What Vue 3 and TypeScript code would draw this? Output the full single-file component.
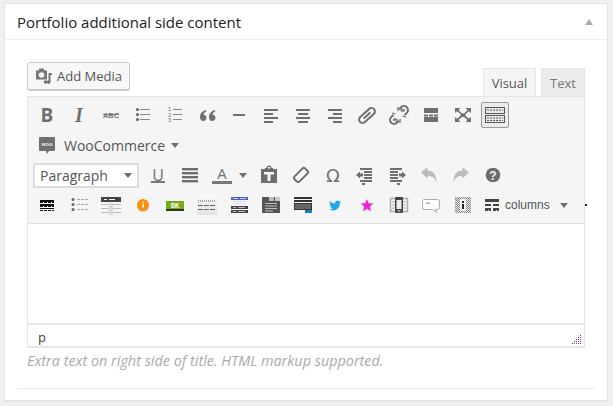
<script setup lang="ts">
// toolbar icons are small inline svgs, 24x24 box centred in a 32px button
const ic = (inner: string) =>
  `<svg width="24" height="24" viewBox="0 0 24 24" xmlns="http://www.w3.org/2000/svg">${inner}</svg>`

const bars = (rows: [number, number, number][], fill = '#6f6f6f', h = 2) =>
  rows.map(([x, y, w]) => `<rect x="${x}" y="${y}" width="${w}" height="${h}" fill="${fill}"/>`).join('')

const glyph = (t: string, style: string) => `<span class="glyph" style="${style}">${t}</span>`

const rowOne = [
  glyph('B', "font:700 19px 'Open Sans',sans-serif"),
  glyph('I', "font:italic 700 20px 'Liberation Serif',serif"),
  ic(`<text x="12" y="15" text-anchor="middle" font-family="Liberation Sans" font-weight="700" font-size="7.5" fill="#777">ABC</text><rect x="4" y="11" width="16" height="1" fill="#777"/>`),
  ic(bars([[9, 6, 10], [9, 11, 10], [9, 16, 10]], '#888', 1) + `<circle cx="6.5" cy="6.5" r="1.6" fill="#666"/><circle cx="6.5" cy="11.5" r="1.6" fill="#666"/><circle cx="6.5" cy="16.5" r="1.6" fill="#666"/>`),
  ic(bars([[10, 6, 9], [10, 11, 9], [10, 16, 9]], '#888', 1) + `<g font-family="Liberation Sans" font-size="5.5" fill="#666"><text x="5" y="8">1</text><text x="5" y="13.5">2</text><text x="5" y="19">3</text></g>`),
  ic(`<path d="M11 7C7.500 8 5 10.500 5 14c0 2.500 1.500 4 3.300 4s3.200-1.400 3.200-3.200-1.300-3-3-3c.3-1.400 1.200-2.500 2.700-3.200zM20 7c-3.500 1-6 3.500-6 7 0 2.500 1.500 4 3.300 4s3.200-1.400 3.200-3.200-1.300-3-3-3c.3-1.400 1.200-2.500 2.700-3.200z" fill="#6f6f6f"/>`),
  ic(bars([[6, 11, 12]])),
  ic(bars([[5, 6, 14], [5, 10, 9], [5, 14, 14], [5, 18, 9]])),
  ic(bars([[5, 6, 14], [7, 10, 10], [5, 14, 14], [7, 18, 10]])),
  ic(bars([[5, 6, 14], [10, 10, 9], [5, 14, 14], [10, 18, 9]])),
  ic(`<g transform="rotate(-42 12 12.500)" fill="none" stroke="#6f6f6f" stroke-width="2"><rect x="2.500" y="9" width="19" height="7" rx="3.500"/><path d="M7.500 12.500h9"/></g>`),
  ic(`<g transform="rotate(-45 12 12)" fill="none" stroke="#6f6f6f" stroke-width="2"><path d="M8 8H5a4 4 0 0 0 0 8h3M16 8h3a4 4 0 0 1 0 8h-3"/><path d="M4 12h3M17 12h3"/></g><path d="M11 4v4M15 5l-1 3.500M5 10l3.500 1M19 14l-3.500-1M9 19l1-3.500M13 20v-4" stroke="#6f6f6f" stroke-width="1.300"/>`),
  ic(bars([[5, 5, 14]], '#6f6f6f', 5) + bars([[5, 11.5, 4], [10, 11.5, 4], [15, 11.5, 4]]) + bars([[5, 14, 14]], '#6f6f6f', 5)),
  ic(`<path d="M4 5h5.500L7.500 7 11 10.500h2L16.500 7l-2-2H20v5l-2-1.700-3.500 2.700v2l3.500 2.700 2-1.700v5h-5.500l2-2-3.500-3h-2l-3.500 3 2 2H4v-5l2 1.700L9.500 13v-2L6 8.300 4 10z" fill="#6f6f6f"/>`),
]

const kitchen = ic(`<g fill="none" stroke="#555" stroke-width="1"><rect x="2.500" y="4.500" width="19" height="6"/><rect x="2.500" y="12.500" width="19" height="7"/></g>` +
  `<path d="M4 7h16M4 15h16M4 17.500h16" stroke="#555" stroke-width="1.200" stroke-dasharray="2 1"/>`)

const rowThree = [
  glyph('U', "font:400 16px 'Open Sans',sans-serif;border-bottom:2px solid #777;line-height:12px;padding:0 1px;margin:2px 0 0 4px"),
  ic(bars([[6, 5, 16], [6, 9, 16], [6, 13, 16], [6, 17, 16]], '#6f6f6f', 2.4)),
]

const rowThreeRest = [
  ic(`<path d="M4 6h4V5h1.500a2.500 2.500 0 0 1 5 0H16v1h4v14H4z" fill="#6f6f6f"/><rect x="7" y="9" width="10" height="2.500" fill="#f5f5f5"/><rect x="10.500" y="9" width="3" height="9" fill="#f5f5f5"/><rect x="11" y="4" width="2" height="1.500" fill="#f5f5f5"/>`),
  ic(`<g transform="rotate(-45 12 12)"><rect x="4.500" y="8.500" width="15" height="7" rx="2" fill="#fbfbfb" stroke="#6f6f6f" stroke-width="2"/></g>`),
  glyph('Ω', "font:400 18px 'DejaVu Sans',sans-serif"),
  ic(bars([[7, 5, 12], [11, 8, 8], [11, 11, 8], [11, 14, 8], [7, 17, 12], [9, 20, 3]], '#6f6f6f', 2) + `<path d="M3 12l4-3.500v2h3v3H7v2z" fill="#6f6f6f"/>`),
  ic(bars([[5, 5, 12], [5, 8, 8], [5, 11, 8], [5, 14, 8], [5, 17, 12], [12, 20, 3]], '#6f6f6f', 2) + `<path d="M21 12l-4-3.500v2h-3v3h3v2z" fill="#6f6f6f"/>`),
  ic(`<path d="M4 9.500 10.500 4v3.500c5.500 0 9 3.500 9 12.500-1.500-5.500-4-7-9-7v2.500z" fill="#bcbcbc"/>`),
  ic(`<path d="M20 9.500 13.500 4v3.500c-5.500 0-9 3.500-9 12.500 1.500-5.500 4-7 9-7v2.500z" fill="#bcbcbc"/>`),
  ic(`<circle cx="12" cy="12" r="7.300" fill="#6d6d6d"/><text x="12" y="16.500" text-anchor="middle" font-family="Liberation Sans" font-weight="700" font-size="12" fill="#f5f5f5">?</text>`),
]

const dash = (y: number, x: number, w: number, c: string, h = 1) =>
  `<path d="M${x} ${y + h / 2}h${w}" stroke="${c}" stroke-width="${h}" stroke-dasharray="3 1"/>`

const rowFour = [
  ic(bars([[5, 7, 14]], '#111', 2) + dash(9, 5, 14, '#111') + bars([[5, 11, 14]], '#111', 2) + dash(13, 5, 14, '#111') + bars([[5, 15, 14]], '#111', 1) + dash(17, 5, 14, '#111')),
  ic(`<circle cx="6" cy="6.500" r="1.500" fill="#666"/><circle cx="6" cy="11.500" r="1.500" fill="#666"/><circle cx="6" cy="16.500" r="1.500" fill="#666"/>` + dash(6, 10, 11, '#aaa') + dash(11, 10, 11, '#aaa') + dash(16, 10, 11, '#aaa')),
  ic(`<rect x="2" y="4" width="20" height="5" fill="#444"/><path d="M5 6.500h3M10 6.500h6" stroke="#fff"/><path d="M2 11.500h8M14 11.500h8M2 15.500h8M14 15.500h8M2 19.500h8M14 19.500h8M11 10v12M13 10v12" stroke="#bbb"/>`),
  ic(`<circle cx="12" cy="13" r="6" fill="#c9c9c9"/><circle cx="12" cy="12" r="6" fill="#f8900f"/><rect x="11.500" y="11" width="1.500" height="3.500" fill="#fff"/><rect x="11.500" y="9" width="1.500" height="1" fill="#fff"/>`),
  ic(`<rect x="3" y="8" width="18" height="8" fill="#74ad12"/><rect x="3" y="16" width="18" height="2" fill="#333"/><text x="12" y="14.500" text-anchor="middle" font-family="DejaVu Sans Mono" font-weight="700" font-size="7" fill="#fff">OK</text>`),
  ic(`<defs><linearGradient id="pbg" x1="0" y1="0" x2="0" y2="1"><stop offset="0" stop-color="#f9f9f9"/><stop offset="1" stop-color="#e2e2e2"/></linearGradient></defs><rect x="2" y="2" width="20" height="20" fill="url(#pbg)"/><path d="M3 8h18" stroke="#555" stroke-dasharray="1 1"/><path d="M3 12.500h18M3 16.500h18" stroke="#666" stroke-dasharray="5 1"/>`),
  ic(bars([[4, 4, 17]], '#4562c4', 3) + `<path d="M6 5.500h5M13 5.500h6" stroke="#c5cff0"/>` + bars([[6, 8, 13], [6, 10, 13]], '#dde', 1) + bars([[4, 13, 17], [4, 17, 17]], '#444', 3) + `<path d="M6 14.500h3M11 14.500h7M6 18.500h3M11 18.500h7" stroke="#bbb"/>`),
  ic(`<rect x="3" y="4" width="18" height="16" fill="#555"/><rect x="10" y="4" width="5" height="4" fill="#bbb"/><rect x="16" y="4" width="5" height="4" fill="#ccc"/>` + bars([[6, 10, 12], [6, 12.5, 12], [6, 15, 12], [6, 17.5, 8]], '#bbb', 1)),
  ic(bars([[3, 4, 18], [3, 7, 18]], '#333', 2) + `<rect x="3.500" y="10.500" width="17" height="6" fill="#666" stroke="#333"/><rect x="14" y="17" width="7" height="3" fill="#1e7fb0"/>`),
  ic(`<g transform="translate(6 6.500) scale(.5)"><path d="M23.953 4.570a10 10 0 01-2.825.775 4.958 4.958 0 002.163-2.723c-.951.555-2.005.959-3.127 1.184a4.920 4.920 0 00-8.384 4.482C7.690 8.095 4.067 6.130 1.640 3.162a4.822 4.822 0 00-.666 2.475c0 1.710.870 3.213 2.188 4.096a4.904 4.904 0 01-2.228-.616v.060a4.923 4.923 0 003.946 4.827 4.996 4.996 0 01-2.212.085 4.936 4.936 0 004.604 3.417 9.867 9.867 0 01-6.102 2.105c-.390 0-.779-.023-1.170-.067a13.995 13.995 0 007.557 2.209c9.053 0 13.998-7.496 13.998-13.985 0-.210 0-.420-.015-.630A9.935 9.935 0 0024 4.590z" fill="#22a8ea"/></g>`),
  ic(`<path d="M12 6l1.700 4.200 4.800.4-3.600 3 1.100 4.600-4-2.500-4 2.500 1.100-4.600-3.600-3 4.800-.4z" fill="#ee1fd6"/>`),
  ic(`<rect x="3.500" y="5.500" width="17" height="13" fill="#f7f7f7" stroke="#aaa" stroke-width="1.500"/><path d="M5 9h3M5 12h3M5 15h3M16 9h3M16 12h3M16 15h3" stroke="#aaa"/><rect x="8" y="4" width="8" height="16" rx="1" fill="#444"/><rect x="9.500" y="7" width="5" height="9" fill="#eee"/><rect x="10.500" y="17.500" width="3" height="1" fill="#eee"/>`),
  ic(`<path d="M5.500 6.500h13a2 2 0 0 1 2 2v6a2 2 0 0 1-2 2h-2l1 3-4-3H5.500a2 2 0 0 1-2-2v-6a2 2 0 0 1 2-2z" fill="#fff" stroke="#aaa"/><path d="M8 9.500v1.500M10 9.500v1.500" stroke="#555"/>`),
  ic(`<defs><pattern id="hatch" width="2" height="2" patternUnits="userSpaceOnUse"><rect width="2" height="2" fill="#e8e8e8"/><rect width="1" height="1" fill="#888"/><rect x="1" y="1" width="1" height="1" fill="#888"/></pattern></defs><rect x="4" y="4" width="16" height="16" fill="url(#hatch)"/><rect x="9" y="6" width="6" height="12" fill="#f5f5f5"/><rect x="11" y="8" width="2" height="2" fill="#222"/><rect x="11" y="11" width="2" height="5" fill="#222"/>`),
]

const columnsIcon = ic(bars([[6, 6, 14]], '#444', 3) + bars([[6, 11, 6], [14, 11, 6], [6, 15, 6], [14, 15, 6]], '#444', 2) + bars([[6, 17, 3], [10, 17, 2], [14, 17, 3], [18, 17, 2]], '#444', 1))

// resize handle: little triangle of dots
const gripDots: { x: number; y: number }[] = []
for (let r = 0; r < 5; r++) {
  for (let c = 4 - r; c < 5; c++) gripDots.push({ x: c * 2, y: r * 2 })
}
</script>

<template>
  <div class="page">
    <section class="card">
      <header class="card-head">
        <h3>Portfolio additional side content</h3>
        <i class="caret-up"></i>
      </header>

      <div class="card-body">
        <div class="editor-top">
          <button class="media-btn">
            <svg width="18" height="18" viewBox="0 0 18 18">
              <path d="M1 3.500h2.500l1-2h4l1 2H12v9H1z" fill="#777" />
              <circle cx="6.500" cy="8" r="2.800" fill="#f7f7f7" />
              <circle cx="10.500" cy="15" r="1.800" fill="#777" />
              <path d="M13.500 6H17v2h-1.500v7a1.800 1.800 0 1 1-2-1.700z" fill="#777" />
            </svg>
            Add Media
          </button>
          <div class="tabs">
            <span class="tab active">Visual</span>
            <span class="tab">Text</span>
          </div>
        </div>

        <div class="editor">
          <div class="toolbar">
            <div class="tool-row">
              <span v-for="(t, i) in rowOne" :key="i" class="tool" v-html="t"></span>
              <span class="tool tool-on" v-html="kitchen"></span>
            </div>
            <div class="tool-row woo-row">
              <svg class="woo-logo" width="16" height="17" viewBox="0 0 16 17">
                <path d="M1 0h14a1 1 0 0 1 1 1v12a1 1 0 0 1-1 1H10l-2 3-1-3H1a1 1 0 0 1-1-1V1a1 1 0 0 1 1-1z" fill="#6f6f6f" />
                <text x="8" y="9" text-anchor="middle" font-family="Liberation Sans" font-weight="700" font-size="5.500" fill="#eee">woo</text>
              </svg>
              <span class="woo-label">WooCommerce</span>
              <i class="caret"></i>
            </div>
            <div class="tool-row">
              <div class="format-select">
                <span>Paragraph</span>
                <i class="caret"></i>
              </div>
              <span v-for="(t, i) in rowThree" :key="i" class="tool" v-html="t"></span>
              <span class="color-tool">
                <span class="color-a">A</span>
                <i class="caret"></i>
              </span>
              <span v-for="(t, i) in rowThreeRest" :key="'r' + i" class="tool" v-html="t"></span>
            </div>
            <div class="tool-row">
              <span v-for="(t, i) in rowFour" :key="i" class="tool" v-html="t"></span>
              <span class="columns-tool">
                <span class="columns-icon" v-html="columnsIcon"></span>
                <span>columns</span>
                <i class="caret"></i>
              </span>
              <i class="overflow-dot"></i>
            </div>
          </div>

          <div class="content"></div>

          <div class="status">
            <span>p</span>
            <svg class="grip" width="9" height="9" viewBox="0 0 9 9">
              <rect v-for="(d, i) in gripDots" :key="i" :x="d.x" :y="d.y" width="1" height="1" fill="#6b3f78" />
            </svg>
          </div>
        </div>

        <p class="hint">Extra text on right side of title. HTML markup supported.</p>
        <hr class="divider" />
      </div>
    </section>
  </div>
</template>

<style scoped>
.page {
  width: 613px;
  height: 406px;
  box-sizing: border-box;
  padding: 3px 0 0 4px;
  background: #f1f1f1;
  font-family: 'Open Sans', sans-serif;
  color: #555;
  overflow: hidden;
}

.card {
  width: 604px;
  height: 398px;
  box-sizing: border-box;
  background: #fff;
  border: 1px solid #e5e5e5;
  box-shadow: 0 1px 1px rgba(0, 0, 0, 0.04);
}

.card-head {
  display: flex;
  align-items: center;
  justify-content: space-between;
  height: 35px;
  padding: 0 14px 0 12px;
  border-bottom: 1px solid #eee;
}

.card-head h3 {
  margin: 0;
  font-size: 15px;
  font-weight: 400;
  color: #222;
}

.caret-up {
  width: 0;
  height: 0;
  border-left: 4px solid transparent;
  border-right: 4px solid transparent;
  border-bottom: 6px solid #aaa;
}

.card-body {
  padding: 22px 22px 0;
}

.editor-top {
  display: flex;
  justify-content: space-between;
  align-items: flex-end;
  height: 34px;
}

.media-btn {
  display: flex;
  align-items: center;
  gap: 4px;
  width: 103px;
  height: 28px;
  margin-bottom: 6px;
  padding: 0 0 0 7px;
  box-sizing: border-box;
  border: 1px solid #ccc;
  border-radius: 3px;
  background: #f7f7f7;
  box-shadow: 0 1px 0 #ccc;
  font: 13px 'Open Sans', sans-serif;
  color: #555;
  white-space: nowrap;
}

.media-btn svg {
  flex: none;
}

.tabs {
  display: flex;
  gap: 5px;
}

.tab {
  display: flex;
  align-items: center;
  justify-content: center;
  height: 28px;
  box-sizing: border-box;
  width: 44px;
  border: 1px solid #e5e5e5;
  border-bottom: 0;
  background: #ebebeb;
  font-size: 13px;
  color: #777;
}

.tab.active {
  width: 53px;
  margin-bottom: -1px;
  height: 29px;
  background: #f5f5f5;
  color: #555;
}

.editor {
  position: relative;
  width: 558px;
  box-sizing: border-box;
  border: 1px solid #e5e5e5;
  border-width: 1px 1px 2px;
}

.toolbar {
  height: 127px;
  padding: 3px 0 0 3px;
  box-sizing: border-box;
  background: #f5f5f5;
  border-bottom: 1px solid #e0e0e0;
}

.tool-row {
  position: relative;
  display: flex;
  align-items: center;
  height: 30px;
}

.tool {
  display: flex;
  align-items: center;
  justify-content: center;
  flex: none;
  width: 32px;
  height: 24px;
  color: #6f6f6f;
}

.tool :deep(svg) {
  display: block;
}

.tool :deep(.glyph) {
  display: block;
}

.tool-on {
  width: 28px;
  height: 26px;
  margin-left: 2px;
  box-sizing: border-box;
  border: 1px solid #999;
  border-radius: 2px;
  background: #ececec;
}

.caret {
  display: inline-block;
  width: 0;
  height: 0;
  border-left: 4px solid transparent;
  border-right: 4px solid transparent;
  border-top: 5px solid #6f6f6f;
}

.woo-row {
  padding-left: 8px;
  font-size: 14px;
}

.woo-logo {
  margin-right: 9px;
}

.woo-label {
  margin-right: 6px;
}

.format-select {
  display: flex;
  align-items: center;
  justify-content: space-between;
  width: 106px;
  height: 25px;
  margin: 0 1px 0 2px;
  padding: 0 5px 0 5px;
  box-sizing: border-box;
  border: 2px solid #ddd;
  background: #fff;
  font-size: 14px;
}

.color-tool {
  display: flex;
  align-items: center;
  width: 49px;
}

.color-a {
  width: 20px;
  margin: 0 7px 0 8px;
  text-align: center;
  font-size: 15px;
  line-height: 15px;
  color: #6f6f6f;
  border-bottom: 3px solid #777;
}

.columns-tool {
  display: flex;
  align-items: center;
  font: 12px 'Liberation Sans', sans-serif;
  color: #555;
}

.columns-icon {
  display: block;
  height: 24px;
  margin-right: 2px;
}

.columns-tool .caret {
  margin-left: 10px;
}

.overflow-dot {
  position: absolute;
  left: 554px;
  top: 14px;
  width: 2px;
  height: 2px;
  background: #222;
}

.content {
  height: 99px;
  background: #fff;
  border-bottom: 2px solid #e5e5e5;
}

.status {
  position: relative;
  height: 21px;
  padding-left: 10px;
  font-size: 13px;
  line-height: 24px;
  color: #444;
}

.grip {
  position: absolute;
  right: 3px;
  bottom: 2px;
}

.hint {
  margin: 3px 0 0;
  font-size: 14.4px;
  font-style: italic;
  line-height: 20px;
  color: #aaa;
}

.divider {
  margin: 17px -10px 0;
  border: 0;
  border-top: 1px solid #eee;
}
</style>

<style>
html,
body {
  margin: 0;
  background: #f1f1f1;
}
</style>
